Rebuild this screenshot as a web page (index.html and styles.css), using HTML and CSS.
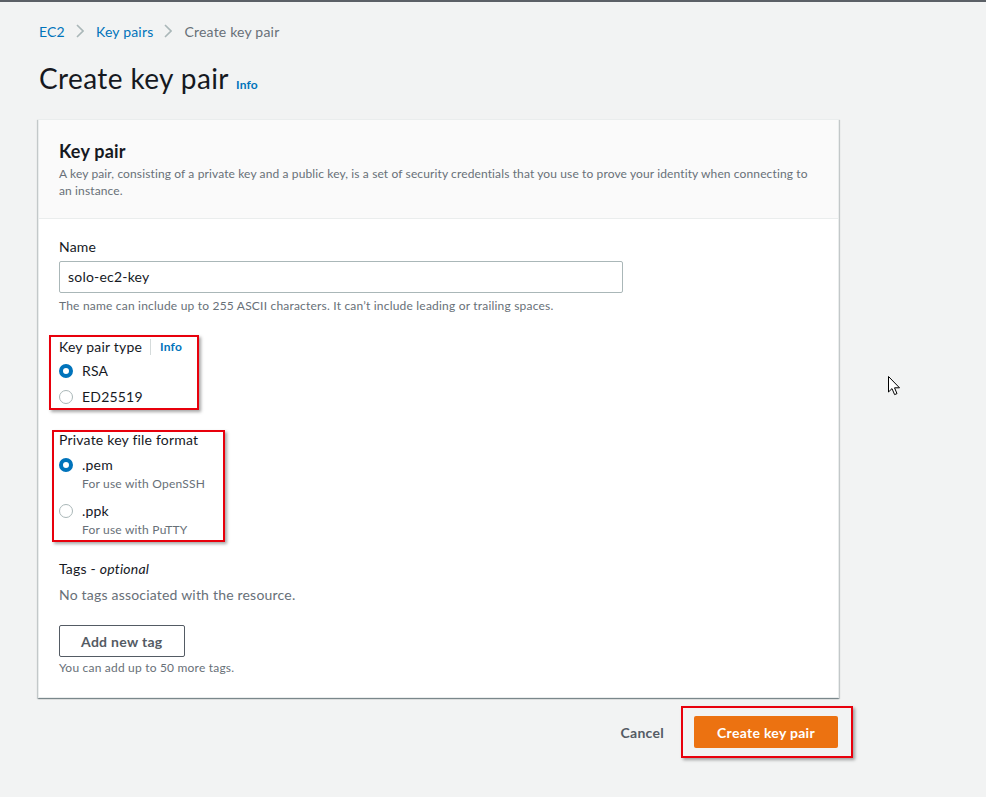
FILE: index.html
```html
<!DOCTYPE html>
<html lang="en">
<head>
<meta charset="utf-8">
<title>Create key pair</title>
<link rel="stylesheet" href="styles.css">
</head>
<body>
<div class="page">
  <nav class="crumbs">
    <a class="crumb-link">EC2</a>
    <svg class="chev" width="8" height="14" viewBox="0 0 8 14"><path d="M1 1l6 6-6 6" fill="none" stroke="#aab7b8" stroke-width="1.6"/></svg>
    <a class="crumb-link">Key pairs</a>
    <svg class="chev" width="8" height="14" viewBox="0 0 8 14"><path d="M1 1l6 6-6 6" fill="none" stroke="#aab7b8" stroke-width="1.6"/></svg>
    <span class="crumb-current">Create key pair</span>
  </nav>

  <header class="title-row">
    <h1>Create key pair</h1>
    <a class="info">Info</a>
  </header>

  <section class="card">
    <div class="card-head">
      <h2>Key pair</h2>
      <p class="desc">A key pair, consisting of a private key and a public key, is a set of security credentials that you use to prove your identity when connecting to an instance.</p>
    </div>
    <div class="card-body">
      <div class="field">
        <label class="label">Name</label>
        <div class="input">solo-ec2-key</div>
        <p class="hint">The name can include up to 255 ASCII characters. It can’t include leading or trailing spaces.</p>
      </div>

      <div class="mark mark-type">
        <div class="label label-info">Key pair type <span class="sep"></span><a class="info">Info</a></div>
        <div class="radio-row"><span class="radio on"></span><span class="rlabel">RSA</span></div>
        <div class="radio-row"><span class="radio"></span><span class="rlabel">ED25519</span></div>
      </div>

      <div class="mark mark-format">
        <div class="label">Private key file format</div>
        <div class="radio-row tall"><span class="radio on"></span><div><div class="rlabel">.pem</div><div class="rsub">For use with OpenSSH</div></div></div>
        <div class="radio-row tall"><span class="radio"></span><div><div class="rlabel">.ppk</div><div class="rsub">For use with PuTTY</div></div></div>
      </div>

      <div class="tags">
        <div class="label">Tags - <i>optional</i></div>
        <p class="empty">No tags associated with the resource.</p>
        <button class="btn-normal">Add new tag</button>
        <p class="hint">You can add up to 50 more tags.</p>
      </div>
    </div>
  </section>

  <footer class="actions">
    <button class="btn-link">Cancel</button>
    <div class="mark mark-primary"><button class="btn-primary">Create key pair</button></div>
  </footer>
</div>
<svg class="cursor" width="13" height="20" viewBox="0 0 13 20"><path d="M0.5 0.5 L0.5 16 L4 12.6 L6.6 18.6 L9 17.6 L6.5 11.8 L11.5 11.8 Z" fill="#fff" stroke="#000" stroke-width="1"/></svg>
</body>
</html>
```

FILE: styles.css
```css
html, body { margin: 0; padding: 0; }
body {
  background: #f2f3f3;
  border-top: 2px solid #5b6066;
  font-family: Lato, "Noto Sans", sans-serif;
  letter-spacing: 0.2px;
  color: #16191f;
  height: 795px;
  box-sizing: border-box;
  position: relative;
  overflow: hidden;
}
.page { padding: 0 0 0 38px; width: 801px; }
.crumbs { display: flex; align-items: center; gap: 11px; height: 20px; margin-top: 19px; font-size: 14px; padding-left: 1px; }
.crumb-link { color: #0073bb; }
.crumb-current { color: #687078; }
.chev { display: block; margin-right: 1px; }
.title-row { display: flex; align-items: baseline; gap: 7px; margin-top: 19px; padding-left: 1px; }
h1 { margin: 0; font-size: 28px; font-weight: 400; line-height: 36px; letter-spacing: 0.4px; }
.info { color: #0073bb; font-size: 12px; font-weight: 700; }
.card {
  margin-top: 23px;
  background: #fff;
  border: 1px solid #eaeded;
  box-shadow: 0 1px 1px 0 rgba(0,28,36,.3), 1px 1px 1px 0 rgba(0,28,36,.15), -1px 1px 1px 0 rgba(0,28,36,.15);
}
.card-head { background: #fafafa; border-bottom: 1px solid #eaeded; padding: 19px 20px 19px 20px; }
h2 { margin: 0; font-size: 18px; font-weight: 700; line-height: 24px; }
.desc { margin: 2px 0 0; font-size: 12px; line-height: 17px; color: #687078; letter-spacing: 0.12px; }
.card-body { padding: 17px 20px 21px 20px; }
.label { font-size: 14px; line-height: 20px; }
.input {
  margin-top: 4px; width: 564px; height: 32px; box-sizing: border-box;
  border: 1px solid #aab7b8; border-radius: 2px; padding: 0 8px;
  font-size: 14px; line-height: 30px;
}
.hint { margin: 5px 0 0; font-size: 12px; line-height: 16px; color: #687078; }
.mark {
  border: 2px solid #e8000c;
  box-shadow: 2px 2px 3px rgba(0,0,0,.35);
  width: fit-content;
  box-sizing: border-box;
}
.mark-type { margin: 21px 0 0 -10px; padding: 1px 15px 0 8px; }
.mark-type .label { line-height: 18px; }
.label-info { display: flex; align-items: center; }
.sep { display: inline-block; width: 1px; height: 16px; background: #d5dbdb; margin: 0 9px 0 8px; }
.radio-row { display: flex; align-items: center; gap: 9px; height: 22px; margin-top: 4px; font-size: 14px; }
.radio { width: 14px; height: 14px; box-sizing: border-box; border-radius: 50%; border: 1px solid #aab7b8; background: #fff; flex: none; }
.radio.on { border: 4px solid #0073bb; }
.radio-row.tall { align-items: flex-start; height: auto; margin-top: 0; padding-top: 7px; margin-bottom: 2px; }
.radio-row.tall .radio { margin-top: 3px; }
.rlabel { font-size: 14px; line-height: 20px; }
.rsub { font-size: 12px; line-height: 16px; color: #687078; margin-top: 1px; }
.mark-format { margin: 20px 0 0 -7px; padding: 0 18px 0 5px; }
.mark-format > .label { line-height: 16px; }
.tags { margin-top: 17px; }
.tags i { font-style: italic; }
.empty { margin: 6px 0 0; font-size: 14px; line-height: 20px; color: #687078; }
.btn-normal {
  margin-top: 20px; height: 32px; padding: 0 21px;
  border: 1px solid #545b64; border-radius: 2px; background: #fff;
  font-family: inherit; font-size: 14px; font-weight: 700; color: #545b64; letter-spacing: 0.3px;
}
.tags .hint { margin-top: 3px; }
.actions { display: flex; justify-content: flex-end; align-items: center; gap: 5px; margin-top: 8px; width: 815px; }
.btn-link { background: none; border: none; font-family: inherit; font-size: 14px; font-weight: 700; color: #545b64; padding: 0 12px; letter-spacing: 0.3px; }
.mark-primary { padding: 8px 13px 8px 11px; }
.btn-primary {
  display: block; height: 32px; padding: 0 23px; border: none; border-radius: 2px;
  background: #ec7211; color: #fff; font-family: inherit; font-size: 14px; font-weight: 700; letter-spacing: 0.3px;
}
.cursor { position: absolute; left: 888px; top: 374px; }
```
